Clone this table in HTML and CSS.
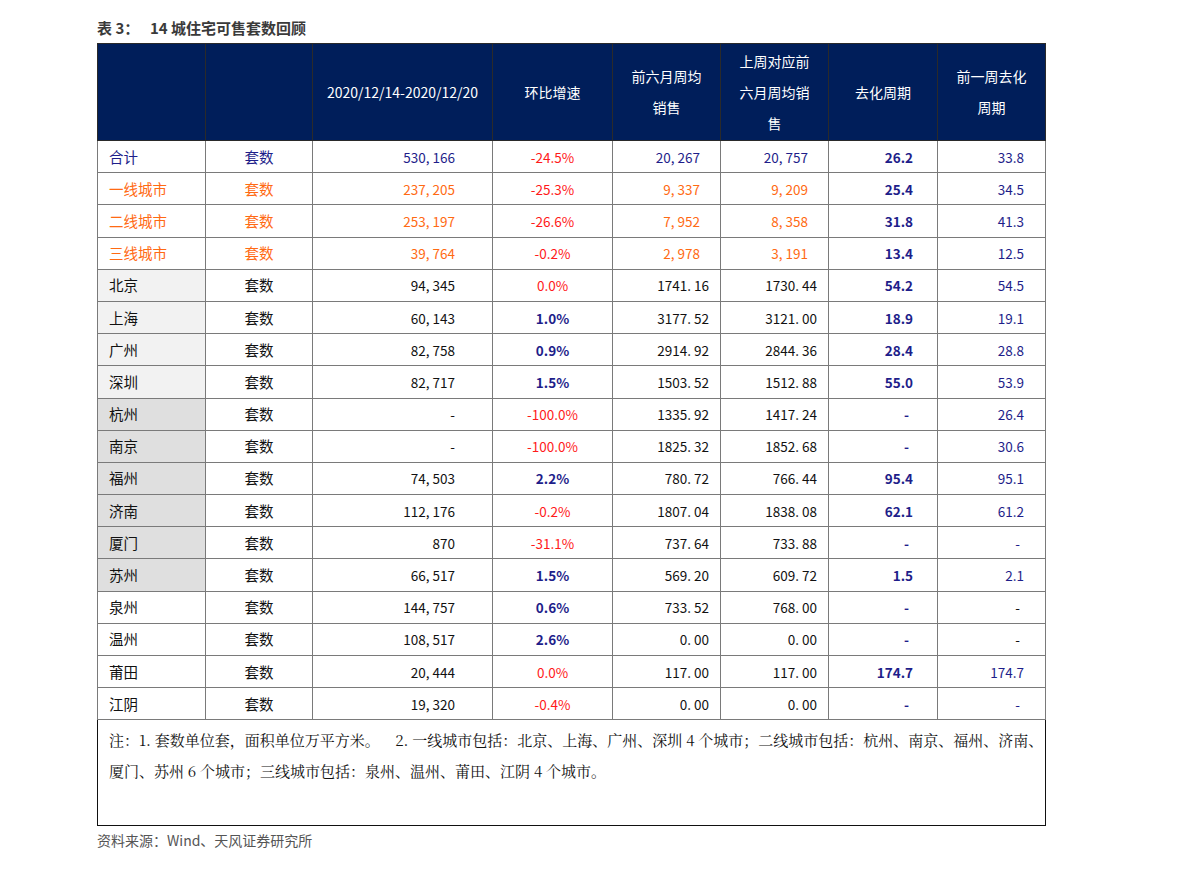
FILE: index.html
```html
<!DOCTYPE html>
<html lang="zh-CN">
<head>
<meta charset="utf-8">
<title>14城住宅可售套数回顾</title>
<link rel="stylesheet" href="styles.css">
</head>
<body>
<div class="page">
  <div class="title"><span class="t-label">表 3：</span><span class="t-text">14 城住宅可售套数回顾</span></div>
  <table class="tbl">
    <colgroup>
      <col class="w1"><col class="w2"><col class="w3"><col class="w4"><col class="w5"><col class="w6"><col class="w7"><col class="w8">
    </colgroup>
    <thead>
      <tr class="head">
        <th></th>
        <th></th>
        <th>2020/12/14-2020/12/20</th>
        <th>环比增速</th>
        <th>前六月周均<br>销售</th>
        <th>上周对应前<br>六月周均销<br>售</th>
        <th>去化周期</th>
        <th>前一周去化<br>周期</th>
      </tr>
    </thead>
    <tbody>
      <tr class="r-total">
        <td class="c1">合计</td><td class="c2">套数</td><td class="c3">530, 166</td><td class="c4 neg">-24.5%</td><td class="c5">20, 267</td><td class="c6">20, 757</td><td class="c7">26.2</td><td class="c8">33.8</td>
      </tr>
      <tr class="r-tier">
        <td class="c1">一线城市</td><td class="c2">套数</td><td class="c3">237, 205</td><td class="c4 neg">-25.3%</td><td class="c5">9, 337</td><td class="c6">9, 209</td><td class="c7">25.4</td><td class="c8">34.5</td>
      </tr>
      <tr class="r-tier">
        <td class="c1">二线城市</td><td class="c2">套数</td><td class="c3">253, 197</td><td class="c4 neg">-26.6%</td><td class="c5">7, 952</td><td class="c6">8, 358</td><td class="c7">31.8</td><td class="c8">41.3</td>
      </tr>
      <tr class="r-tier">
        <td class="c1">三线城市</td><td class="c2">套数</td><td class="c3">39, 764</td><td class="c4 neg">-0.2%</td><td class="c5">2, 978</td><td class="c6">3, 191</td><td class="c7">13.4</td><td class="c8">12.5</td>
      </tr>
      <tr class="r-city">
        <td class="c1 g1">北京</td><td class="c2">套数</td><td class="c3">94, 345</td><td class="c4 neg">0.0%</td><td class="c5 dec">1741. 16</td><td class="c6 dec">1730. 44</td><td class="c7">54.2</td><td class="c8">54.5</td>
      </tr>
      <tr class="r-city">
        <td class="c1 g1">上海</td><td class="c2">套数</td><td class="c3">60, 143</td><td class="c4 pos">1.0%</td><td class="c5 dec">3177. 52</td><td class="c6 dec">3121. 00</td><td class="c7">18.9</td><td class="c8">19.1</td>
      </tr>
      <tr class="r-city">
        <td class="c1 g1">广州</td><td class="c2">套数</td><td class="c3">82, 758</td><td class="c4 pos">0.9%</td><td class="c5 dec">2914. 92</td><td class="c6 dec">2844. 36</td><td class="c7">28.4</td><td class="c8">28.8</td>
      </tr>
      <tr class="r-city">
        <td class="c1 g1">深圳</td><td class="c2">套数</td><td class="c3">82, 717</td><td class="c4 pos">1.5%</td><td class="c5 dec">1503. 52</td><td class="c6 dec">1512. 88</td><td class="c7">55.0</td><td class="c8">53.9</td>
      </tr>
      <tr class="r-city">
        <td class="c1 g2">杭州</td><td class="c2">套数</td><td class="c3">-</td><td class="c4 neg">-100.0%</td><td class="c5 dec">1335. 92</td><td class="c6 dec">1417. 24</td><td class="c7 dash">-</td><td class="c8">26.4</td>
      </tr>
      <tr class="r-city">
        <td class="c1 g2">南京</td><td class="c2">套数</td><td class="c3">-</td><td class="c4 neg">-100.0%</td><td class="c5 dec">1825. 32</td><td class="c6 dec">1852. 68</td><td class="c7 dash">-</td><td class="c8">30.6</td>
      </tr>
      <tr class="r-city">
        <td class="c1 g2">福州</td><td class="c2">套数</td><td class="c3">74, 503</td><td class="c4 pos">2.2%</td><td class="c5 dec">780. 72</td><td class="c6 dec">766. 44</td><td class="c7">95.4</td><td class="c8">95.1</td>
      </tr>
      <tr class="r-city">
        <td class="c1 g2">济南</td><td class="c2">套数</td><td class="c3">112, 176</td><td class="c4 neg">-0.2%</td><td class="c5 dec">1807. 04</td><td class="c6 dec">1838. 08</td><td class="c7">62.1</td><td class="c8">61.2</td>
      </tr>
      <tr class="r-city">
        <td class="c1 g2">厦门</td><td class="c2">套数</td><td class="c3">870</td><td class="c4 neg">-31.1%</td><td class="c5 dec">737. 64</td><td class="c6 dec">733. 88</td><td class="c7 dash">-</td><td class="c8 dash">-</td>
      </tr>
      <tr class="r-city">
        <td class="c1 g2">苏州</td><td class="c2">套数</td><td class="c3">66, 517</td><td class="c4 pos">1.5%</td><td class="c5 dec">569. 20</td><td class="c6 dec">609. 72</td><td class="c7">1.5</td><td class="c8">2.1</td>
      </tr>
      <tr class="r-city">
        <td class="c1">泉州</td><td class="c2">套数</td><td class="c3">144, 757</td><td class="c4 pos">0.6%</td><td class="c5 dec">733. 52</td><td class="c6 dec">768. 00</td><td class="c7 dash">-</td><td class="c8 dash blk">-</td>
      </tr>
      <tr class="r-city">
        <td class="c1">温州</td><td class="c2">套数</td><td class="c3">108, 517</td><td class="c4 pos">2.6%</td><td class="c5 dec">0. 00</td><td class="c6 dec">0. 00</td><td class="c7 dash">-</td><td class="c8 dash blk">-</td>
      </tr>
      <tr class="r-city">
        <td class="c1">莆田</td><td class="c2">套数</td><td class="c3">20, 444</td><td class="c4 neg">0.0%</td><td class="c5 dec">117. 00</td><td class="c6 dec">117. 00</td><td class="c7">174.7</td><td class="c8">174.7</td>
      </tr>
      <tr class="r-city">
        <td class="c1">江阴</td><td class="c2">套数</td><td class="c3">19, 320</td><td class="c4 neg">-0.4%</td><td class="c5 dec">0. 00</td><td class="c6 dec">0. 00</td><td class="c7 dash">-</td><td class="c8 dash">-</td>
      </tr>
      <tr class="notes">
        <td colspan="8">注：1. 套数单位套，面积单位万平方米。&nbsp;&nbsp;&nbsp; 2. 一线城市包括：北京、上海、广州、深圳 4 个城市；二线城市包括：杭州、南京、福州、济南、<br>厦门、苏州 6 个城市；三线城市包括：泉州、温州、莆田、江阴 4 个城市。</td>
      </tr>
    </tbody>
  </table>
  <div class="source">资料来源：Wind、天风证券研究所</div>
</div>
</body>
</html>
```

FILE: styles.css
```css
html, body {
  margin: 0;
  padding: 0;
  background: #ffffff;
}

.page {
  padding: 17px 0 0 97px;
  font-family: "Noto Sans CJK SC", "Noto Sans", sans-serif;
}

.title {
  font-size: 15px;
  font-weight: bold;
  color: #3a3a3a;
  line-height: 22px;
  height: 26px;
  white-space: pre;
}

.t-label {
  display: inline-block;
  width: 53px;
}

.tbl {
  border-collapse: collapse;
  table-layout: fixed;
  width: 948px;
}

.w1 { width: 108px; }
.w2 { width: 107px; }
.w3 { width: 180px; }
.w4 { width: 120px; }
.w5 { width: 108px; }
.w6 { width: 108px; }
.w7 { width: 109px; }
.w8 { width: 108px; }

.head th {
  background: #001e5a;
  color: #ffffff;
  font-weight: normal;
  font-size: 14px;
  line-height: 31px;
  height: 96px;
  padding: 0;
  text-align: center;
  vertical-align: middle;
  border: 1px solid #2a2a2a;
}

.tbl td {
  border: 1px solid #7a7a7a;
  height: 31.2px;
  padding: 0;
  vertical-align: middle;
  font-size: 13.5px;
  line-height: 20px;
  white-space: nowrap;
}

.tbl td.c3 {
  border-left: 1px solid #000000;
}

.c1 { text-align: left; padding-left: 11px !important; font-size: 14.5px !important; }
.c2 { text-align: center; font-size: 14.5px !important; }
.c3 { text-align: right; padding-right: 37px !important; }
.c4 { text-align: center; }
.c5, .c6 { text-align: right; padding-right: 20px !important; }
.c5.dec, .c6.dec { padding-right: 11px !important; }
.c7 { text-align: right; padding-right: 24px !important; font-weight: bold; color: #1e1e8a; }
.c8 { text-align: right; padding-right: 21px !important; color: #1e1e8a; }
.c7.dash { padding-right: 28px !important; }
.c8.dash { padding-right: 25px !important; }

.g1 { background: #f2f2f2; }
.g2 { background: #dfdfdf; }

.r-total td { color: #1e1e8a; }
.r-tier td { color: #ff6a13; }
.r-city td { color: #111111; }

.r-total td.c7, .r-tier td.c7, .r-city td.c7 { color: #1e1e8a; }
.r-total td.c8, .r-tier td.c8, .r-city td.c8 { color: #1e1e8a; }
.r-city td.c8.blk { color: #111111; }

.tbl td.neg { color: #ff1a1a; }
.tbl td.pos { color: #1e1e8a; font-weight: bold; }

.notes td {
  height: 101px;
  vertical-align: top;
  padding: 4px 0 0 11px;
  font-family: "Noto Serif CJK SC", "Liberation Serif", "Noto Sans CJK SC", serif;
  font-size: 15px;
  line-height: 31px;
  color: #111111;
  border: 1px solid #111111;
  white-space: normal;
}

.source {
  margin-top: 4px;
  font-size: 14px;
  line-height: 20px;
  color: #555555;
}
```
